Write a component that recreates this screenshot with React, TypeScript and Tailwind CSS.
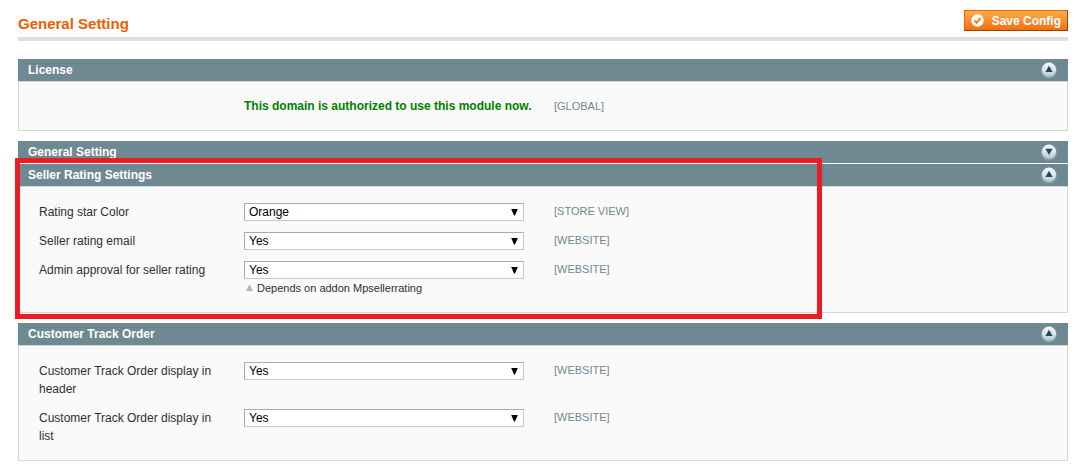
import { useState } from 'react'
import type { ReactNode } from 'react'

interface SectionProps {
  title: string
  defaultOpen?: boolean
  className?: string
  children?: ReactNode
}

interface FieldProps {
  id: string
  label: string
  options: string[]
  scope: string
  note?: string
}

function ToggleIcon({ open }: { open: boolean }) {
  return (
    <svg width="18" height="18" viewBox="0 0 18 18" aria-hidden="true">
      <defs>
        <linearGradient id="toggle-face" x1="0" y1="0" x2="0" y2="1">
          <stop offset="0" stopColor="#f4f7f8" />
          <stop offset="0.5" stopColor="#dde6e9" />
          <stop offset="1" stopColor="#b3cad0" />
        </linearGradient>
      </defs>
      <circle cx="9" cy="9.5" r="8" fill="#89a0a8" />
      <circle cx="9" cy="8.7" r="7.1" fill="url(#toggle-face)" />
      <path d={open ? 'M9 4.8 12.6 11H5.4Z' : 'M9 12 12.6 5.8H5.4Z'} fill="#1d4d5d" />
    </svg>
  )
}

function Section({ title, defaultOpen = true, className = '', children }: SectionProps) {
  const [open, setOpen] = useState(defaultOpen)
  return (
    <section className={className}>
      <h4>
        <button
          type="button"
          aria-expanded={open}
          onClick={() => setOpen(!open)}
          className="flex h-[22px] w-full items-center justify-between bg-[#6f8992] px-[10px] text-left font-bold text-white"
        >
          {title}
          <ToggleIcon open={open} />
        </button>
      </h4>
      {open && children && (
        <div className="flex flex-col gap-[10px] border border-[#d6d6d6] bg-[#fafafa] px-5 py-[15px]">
          {children}
        </div>
      )}
    </section>
  )
}

function Scope({ children }: { children: ReactNode }) {
  return <span className="text-[11px] leading-4 text-[#6f8992]">{children}</span>
}

function Field({ id, label, options, scope, note }: FieldProps) {
  return (
    <div className="flex items-start pt-px">
      <label htmlFor={id} className="mr-[15px] w-[190px] shrink-0">
        {label}
      </label>
      <div className="mr-[30px] w-[280px]">
        <div className="relative">
          <select
            id={id}
            className="block h-[18px] w-full appearance-none border border-t-[#aaa] border-r-[#c8c8c8] border-b-[#c8c8c8] border-l-[#aaa] bg-white px-1 leading-4 text-black"
          >
            {options.map((option) => (
              <option key={option}>{option}</option>
            ))}
          </select>
          <svg
            width="7"
            height="7"
            viewBox="0 0 7 7"
            className="pointer-events-none absolute top-[6px] right-[6px]"
            aria-hidden="true"
          >
            <path d="M.2 0H6.8L4 6.4H3Z" />
          </svg>
        </div>
        {note && (
          <p className="flex items-center gap-1 pl-[2px] text-[11px]">
            <svg width="7" height="6" viewBox="0 0 7 6" aria-hidden="true">
              <path d="M3 0H4L7 6H0Z" fill="#a9bbc0" />
            </svg>
            {note}
          </p>
        )}
      </div>
      <Scope>{scope}</Scope>
    </div>
  )
}

export default function App() {
  return (
    <main className="bg-white pt-[10px] pr-[11px] pb-[7px] pl-[18px] font-['Liberation_Sans',Arial,sans-serif] text-xs leading-[18px] text-[#2f2f2f]">
      <header className="flex items-start justify-between border-b-4 border-[#dfdfdf] pb-[6px]">
        <h3 className="pt-[7px] text-[15px] leading-[14px] font-bold text-[#eb5e00]">General Setting</h3>
        <button
          type="button"
          className="flex h-[21px] items-center gap-2 border border-t-[#ed6502] border-r-[#a04300] border-b-[#a04300] border-l-[#ed6502] bg-linear-to-b from-[#ffac47] to-[#f36f0a] px-[6px] font-bold text-white"
        >
          <svg width="13" height="13" viewBox="0 0 13 13" aria-hidden="true">
            <circle cx="6.5" cy="6.5" r="6.2" fill="#fff" />
            <path d="M3.5 6.4 5.6 8.8 9.5 4" fill="none" stroke="#f07d1c" strokeWidth="2" />
          </svg>
          Save Config
        </button>
      </header>

      <Section title="License" className="mt-[18px]">
        <div className="flex items-center pl-[205px]">
          <p className="mr-[30px] w-[280px] font-bold whitespace-nowrap text-[#008000]">
            This domain is authorized to use this module now.
          </p>
          <Scope>[GLOBAL]</Scope>
        </div>
      </Section>

      <Section title="General Setting" defaultOpen={false} className="mt-[10px]" />

      <div className="relative mt-px">
        <Section title="Seller Rating Settings">
          <Field id="star-color" label="Rating star Color" options={['Orange']} scope="[STORE VIEW]" />
          <Field id="rating-email" label="Seller rating email" options={['Yes', 'No']} scope="[WEBSITE]" />
          <Field
            id="rating-approval"
            label="Admin approval for seller rating"
            options={['Yes', 'No']}
            scope="[WEBSITE]"
            note="Depends on addon Mpsellerrating"
          />
        </Section>
        <div className="pointer-events-none absolute -top-[6px] right-[246px] -bottom-[6px] -left-[3px] border-5 border-[#ed1c24]" />
      </div>

      <Section title="Customer Track Order" className="mt-[10px]">
        <Field
          id="track-header"
          label="Customer Track Order display in header"
          options={['Yes', 'No']}
          scope="[WEBSITE]"
        />
        <Field
          id="track-list"
          label="Customer Track Order display in list"
          options={['Yes', 'No']}
          scope="[WEBSITE]"
        />
      </Section>
    </main>
  )
}
